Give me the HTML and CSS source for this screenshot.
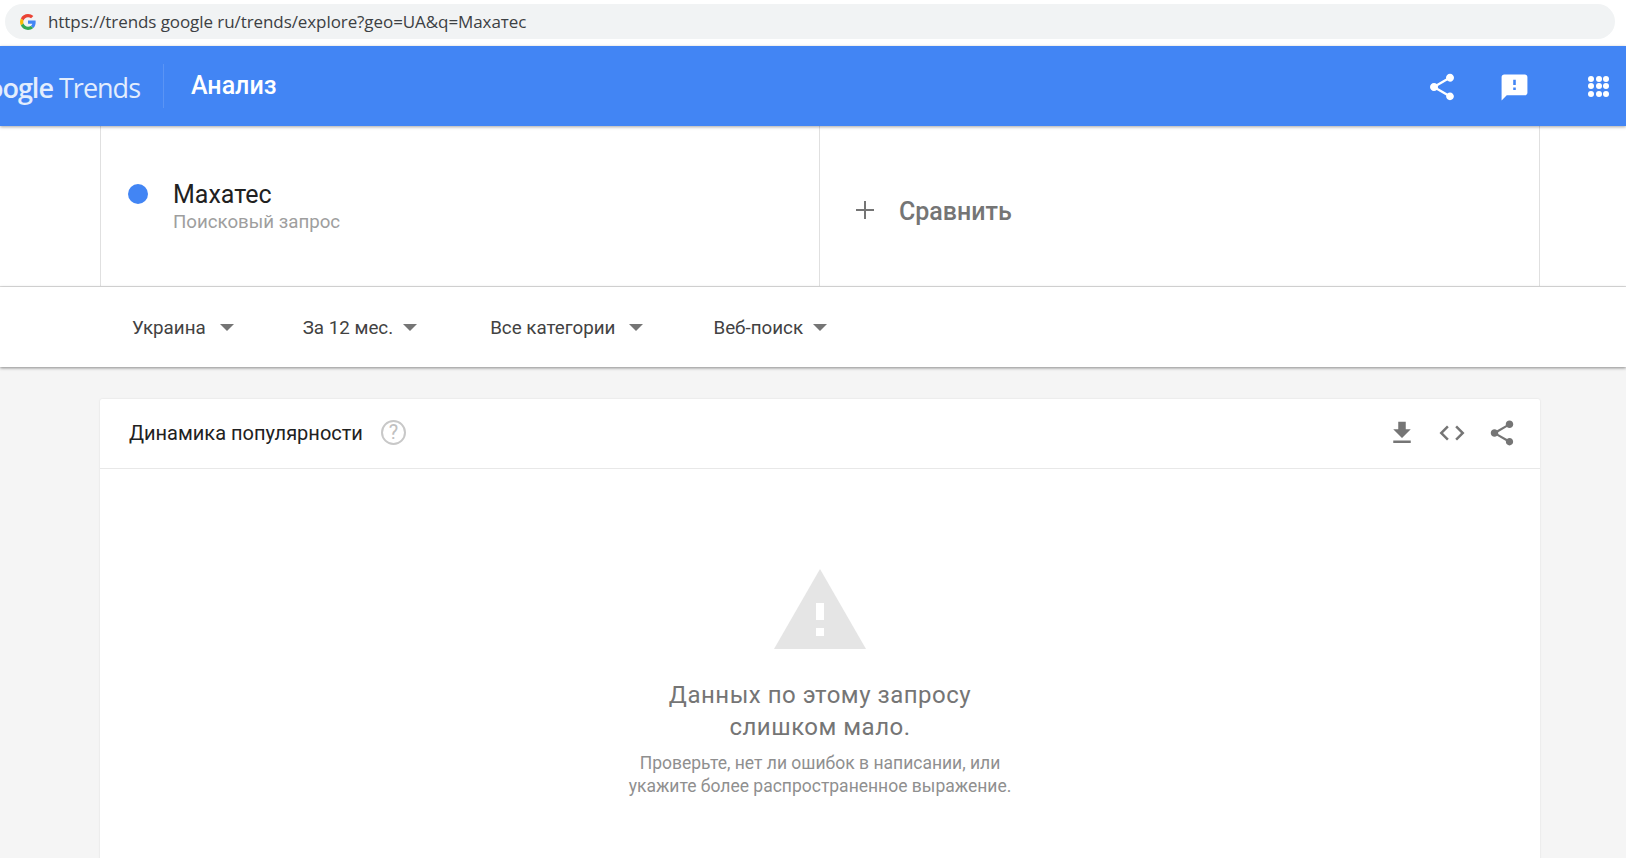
FILE: index.html
```html
<!DOCTYPE html>
<html lang="ru">
<head>
<meta charset="utf-8">
<title>Google Trends</title>
<link rel="stylesheet" href="styles.css">
</head>
<body>
<div class="chrome">
  <div class="omnibox">
    <svg class="favicon" viewBox="0 0 48 48" width="16" height="16"><path fill="#EA4335" d="M24 9.5c3.5 0 6.7 1.300 9.200 3.400l6.900-6.900C35.900 2.400 30.300 0 24 0 14.600 0 6.500 5.400 2.600 13.200l8 6.200C12.500 13.600 17.800 9.500 24 9.500z"/><path fill="#4285F4" d="M47 24.500c0-1.600-.1-3.200-.4-4.700H24v9.100h13c-.6 3-2.300 5.500-4.800 7.200l7.700 6C44.400 38 47 31.800 47 24.500z"/><path fill="#FBBC05" d="M10.600 28.600C10.100 27.200 9.800 25.600 9.800 24s.3-3.200.8-4.600l-8-6.200C.9 16.500 0 20.100 0 24s.9 7.500 2.600 10.800l8-6.200z"/><path fill="#34A853" d="M24 48c6.500 0 11.900-2.100 15.900-5.900l-7.700-6c-2.200 1.500-4.900 2.300-8.200 2.300-6.200 0-11.500-4.100-13.400-9.800l-8 6.200C6.500 42.600 14.600 48 24 48z"/></svg>
    <span class="url">https://trends google ru/trends/explore?geo=UA&amp;q=Махатес</span>
  </div>
</div>
<header class="appbar">
  <div class="logo"><span class="logo-text"><span class="logo-g">Google</span> Trends</span></div>
  <div class="appbar-title">Анализ</div>
  <div class="appbar-actions">
    <svg class="icon-share" viewBox="0 0 24 24" width="32" height="32"><path fill="#fff" d="M18 16.080c-.76 0-1.440.3-1.960.77L8.910 12.700c.05-.23.090-.46.090-.7s-.04-.47-.09-.7l7.050-4.110c.54.500 1.250.81 2.040.81 1.660 0 3-1.340 3-3s-1.340-3-3-3-3 1.340-3 3c0 .24.040.47.090.7L8.040 9.810C7.500 9.310 6.790 9 6 9c-1.660 0-3 1.340-3 3s1.340 3 3 3c.79 0 1.500-.31 2.040-.81l7.120 4.160c-.05.21-.08.43-.08.650 0 1.610 1.310 2.920 2.920 2.920s2.920-1.310 2.920-2.920-1.310-2.920-2.920-2.920z"/></svg>
    <svg class="icon-feedback" viewBox="0 0 24 24" width="31" height="31"><path fill="#fff" d="M20 2H4c-1.100 0-2 .9-2 2v18l4-4h14c1.100 0 2-.9 2-2V4c0-1.100-.9-2-2-2zm-7 12h-2v-2h2v2zm0-4h-2V6h2v4z"/></svg>
    <div class="apps">
      <i></i><i></i><i></i><i></i><i></i><i></i><i></i><i></i><i></i>
    </div>
  </div>
</header>
<section class="compare">
  <div class="term">
    <span class="dot"></span>
    <div class="term-text">
      <div class="term-name">Махатес</div>
      <div class="term-type">Поисковый запрос</div>
    </div>
  </div>
  <div class="term add">
    <svg class="plus" viewBox="0 0 20 20" width="20" height="20"><path fill="#757575" d="M9 1h2v8h8v2h-8v8H9v-8H1V9h8z"/></svg>
    <span class="add-label">Сравнить</span>
  </div>
</section>
<nav class="filters">
  <div class="filter f1">Украина<span class="caret"></span></div>
  <div class="filter f2">За 12 мес.<span class="caret"></span></div>
  <div class="filter f3">Все категории<span class="caret"></span></div>
  <div class="filter f4">Веб-поиск<span class="caret"></span></div>
</nav>
<main class="content">
  <article class="card">
    <div class="card-head">
      <span class="card-title">Динамика популярности</span>
      <span class="help">?</span>
      <div class="card-actions">
        <svg viewBox="0 0 24 24" width="30" height="30"><path fill="#757575" d="M19 9h-4V3H9v6H5l7 7 7-7zM5 18v2h14v-2H5z"/></svg>
        <svg viewBox="0 0 24 24" width="30" height="30"><path fill="#757575" d="M9.400 16.600 4.800 12l4.600-4.600L8 6l-6 6 6 6 1.400-1.400zm5.200 0 4.600-4.600-4.600-4.600L16 6l6 6-6 6-1.400-1.400z"/></svg>
        <svg viewBox="0 0 24 24" width="30" height="30"><path fill="#757575" d="M18 16.080c-.76 0-1.440.3-1.960.77L8.910 12.700c.05-.23.090-.46.090-.7s-.04-.47-.09-.7l7.050-4.110c.54.500 1.250.81 2.040.81 1.660 0 3-1.340 3-3s-1.340-3-3-3-3 1.340-3 3c0 .24.040.47.090.7L8.040 9.810C7.500 9.310 6.790 9 6 9c-1.660 0-3 1.340-3 3s1.340 3 3 3c.79 0 1.500-.31 2.040-.81l7.120 4.160c-.05.21-.08.43-.08.650 0 1.610 1.310 2.920 2.920 2.920s2.920-1.310 2.920-2.920-1.310-2.920-2.920-2.920z"/></svg>
      </div>
    </div>
    <div class="empty">
      <svg class="warn" viewBox="0 0 92 80" width="92" height="80"><path fill="#e5e5e5" d="M46 0 92 80H0z"/><path fill="#fff" d="M42 34h8v17h-8zM42 59h8v8h-8z"/></svg>
      <div class="empty-title">Данных по этому запросу<br>слишком мало.</div>
      <div class="empty-text">Проверьте, нет ли ошибок в написании, или<br>укажите более распространенное выражение.</div>
    </div>
  </article>
</main>
</body>
</html>
```

FILE: styles.css
```css
* { box-sizing: border-box; }
html, body { margin: 0; height: 858px; overflow: hidden; }
body { background: #f5f5f5; font-family: Roboto, "Liberation Sans", sans-serif; color: #212121; }

.chrome { height: 46px; background: #fff; padding: 4px 11px 7px 5px; }
.omnibox { height: 35px; background: #f1f3f4; border-radius: 17.500px; display: flex; align-items: center; padding-left: 15px; }
.favicon { flex: none; }
.url { margin-left: 12px; font: 17px/20px "Open Sans", sans-serif; letter-spacing: -.08px; color: #3c4043; }

.appbar { position: relative; z-index: 3; height: 80px; background: #4285f4; box-shadow: 0 1px 3px rgba(0,0,0,.35); display: flex; align-items: center; color: #fff; }
.logo { width: 164px; height: 44px; border-right: 1px solid #5a94f5; overflow: hidden; flex: none; display: flex; align-items: center; justify-content: flex-end; padding-right: 23px; }
.logo-text { font: 27px/44px "Open Sans", sans-serif; letter-spacing: -1px; white-space: nowrap; color: #e3edfd; padding-top: 4px; }
.logo-g { font-weight: 600; }
.appbar-title { margin-left: 27px; font: 500 25px/30px Roboto, sans-serif; }
.appbar-actions { margin-left: auto; display: flex; align-items: center; }
.icon-share { margin-right: 41px; margin-top: 2px; }
.icon-feedback { margin-right: 58px; margin-top: 2px; }
.apps { width: 21px; height: 21px; margin-right: 17px; display: grid; grid-template-columns: repeat(3, 6px); grid-auto-rows: 6px; gap: 1.500px; }
.apps i { background: #fff; border-radius: 50%; }

.compare { height: 161px; background: #fff; padding: 0 86px 0 100px; display: grid; grid-template-columns: 719px 721px; border-bottom: 1px solid #e0e0e0; }
.term { border-left: 1px solid #e0e0e0; display: flex; }
.term:last-child { border-right: 1px solid #e0e0e0; }
.dot { width: 20px; height: 20px; border-radius: 50%; background: #4285f4; margin: 58px 0 0 27px; flex: none; }
.term-text { margin: 54px 0 0 25px; }
.term-name { font: 400 25px/30px Roboto, sans-serif; color: #212121; }
.term-type { font: 400 18.700px/24px Roboto, sans-serif; color: #9e9e9e; }
.add { align-items: center; padding-left: 35px; }
.plus { flex: none; margin-top: 8px; }
.add-label { margin-left: 24px; font: 500 25px/30px Roboto, sans-serif; color: #757575; margin-top: 12px; }

.filters { position: relative; z-index: 2; height: 80px; background: #fff; box-shadow: 0 1px 3px rgba(0,0,0,.45); padding: 0 0 0 132px; display: flex; align-items: center; font: 400 18.800px/24px Roboto, sans-serif; color: #424242; }
.filter { display: flex; align-items: center; padding-top: 2px; }
.caret { width: 0; height: 0; border-left: 7px solid transparent; border-right: 7px solid transparent; border-top: 7px solid #757575; margin: -2px 0 0 14px; }
.f1 { margin-right: 69px; }
.f2 { margin-right: 73px; }
.f3 { margin-right: 70px; }
.f2 .caret { margin-left: 10px; }
.f4 .caret { margin-left: 10px; }

.content { padding: 32px 86px 0 100px; }
.card { background: #fff; border-radius: 2px 2px 0 0; height: 500px; box-shadow: 0 0 2px rgba(0,0,0,.12); }
.card-head { height: 70px; border-bottom: 1px solid #e8e8e8; display: flex; align-items: center; padding: 0 0 2px 29px; }
.card-title { font: 400 20px/26px Roboto, sans-serif; color: #212121; }
.help { width: 25px; height: 25px; margin-left: 18px; border: 2px solid #c8c8c8; border-radius: 50%; color: #c0c0c0; font: 400 20px/21px Roboto, sans-serif; text-align: center; }
.card-actions { margin-left: auto; margin-right: 23px; display: flex; gap: 20px; }

.empty { display: flex; flex-direction: column; align-items: center; padding-top: 100px; text-align: center; }
.warn { display: block; }
.empty-title { margin-top: 30px; font: 400 24px/32px Roboto, sans-serif; letter-spacing: .5px; color: #757575; }
.empty-text { margin-top: 9px; font: 400 17.500px/22.500px Roboto, sans-serif; color: #8f8f8f; }
```
